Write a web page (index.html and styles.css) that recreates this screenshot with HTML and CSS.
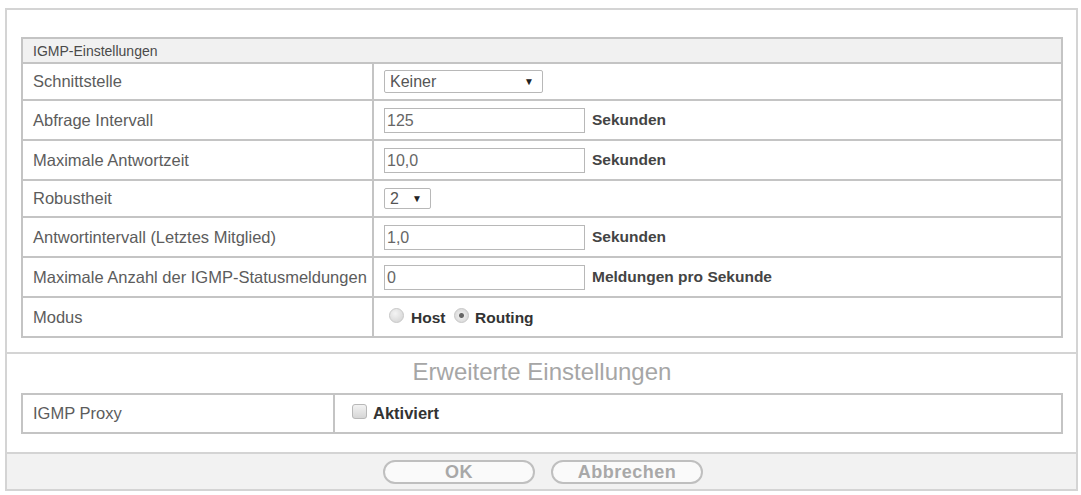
FILE: index.html
```html
<!DOCTYPE html>
<html lang="de">
<head>
  <meta charset="UTF-8" />
  <title>IGMP</title>
  <link rel="stylesheet" href="styles.css">
</head>
<body>

<div class="frame">
  <div class="section">
    <table class="grid">
      <tr class="head"><td colspan="2">IGMP-Einstellungen</td></tr>
      <tr class="short">
        <td class="label">Schnittstelle</td>
        <td class="value"><span class="select wide">Keiner<span class="arrow">&#9660;</span></span></td>
      </tr>
      <tr>
        <td class="label">Abfrage Intervall</td>
        <td class="value"><span class="input">125</span><b class="unit">Sekunden</b></td>
      </tr>
      <tr>
        <td class="label">Maximale Antwortzeit</td>
        <td class="value"><span class="input">10,0</span><b class="unit">Sekunden</b></td>
      </tr>
      <tr class="short">
        <td class="label">Robustheit</td>
        <td class="value"><span class="select small">2<span class="arrow">&#9660;</span></span></td>
      </tr>
      <tr>
        <td class="label">Antwortintervall (Letztes Mitglied)</td>
        <td class="value"><span class="input">1,0</span><b class="unit">Sekunden</b></td>
      </tr>
      <tr>
        <td class="label">Maximale Anzahl der IGMP-Statusmeldungen</td>
        <td class="value"><span class="input">0</span><b class="unit">Meldungen pro Sekunde</b></td>
      </tr>
      <tr>
        <td class="label">Modus</td>
        <td class="value">
          <span class="radio"></span><b class="opt">Host</b>
          <span class="radio on"></span><b class="opt">Routing</b>
        </td>
      </tr>
    </table>
  </div>

  <div class="section extra">
    <div class="title">Erweiterte Einstellungen</div>
    <table class="grid proxy">
      <tr>
        <td class="label">IGMP Proxy</td>
        <td class="value"><span class="check"></span><b class="opt">Aktiviert</b></td>
      </tr>
    </table>
  </div>

  <div class="footer">
    <button class="pill">OK</button>
    <button class="pill">Abbrechen</button>
  </div>
</div>

</body>
</html>
```

FILE: styles.css
```css
* {
  box-sizing: border-box;
  font-family: 'Liberation Sans', Arial, sans-serif;
}

body {
  margin: 0;
  padding: 8px 3px 0 5px;
  background-color: #fff;
}

.frame {
  width: 1073px;
  border: 2px solid #d4d4d4;
  background-color: #fff;
}

.section {
  padding: 27px 13px 14px 14px;
  border-bottom: 2px solid #d4d4d4;
}

.grid {
  width: 100%;
  border-collapse: collapse;
  border: 2px solid #c4c4c4;
}

.grid td {
  border: 2px solid #c4c4c4;
  height: 40px;
  font-size: 16.5px;
  color: #5c5c5c;
  vertical-align: middle;
}

.grid tr.short td {
  height: 37px;
}

.grid tr.head td {
  height: 25px;
  font-size: 14px;
  padding-left: 10px;
  color: #4a4a4a;
  background-color: #f1f1f1;
}

.grid td.label {
  width: 351px;
  padding-left: 10px;
}

.grid td.value {
  padding-left: 10px;
}

.input {
  display: inline-block;
  width: 201px;
  height: 25px;
  line-height: 23px;
  padding-left: 2px;
  border: 1px solid #b8b8b8;
  font-size: 16px;
  color: #666;
  vertical-align: middle;
}

.unit {
  display: inline-block;
  margin-left: 7px;
  font-size: 15.5px;
  color: #444;
  vertical-align: middle;
}

.select {
  display: inline-flex;
  justify-content: space-between;
  align-items: center;
  height: 23px;
  padding: 0 8px 0 5px;
  border: 1px solid #b8b8b8;
  border-radius: 2px;
  font-size: 16px;
  color: #555;
}

.select.wide {
  width: 159px;
}

.select.small {
  width: 47px;
  height: 21px;
}

.arrow {
  font-size: 10px;
  color: #222;
}

.radio {
  display: inline-block;
  width: 15px;
  height: 15px;
  margin: 0 7px 0 5px;
  border-radius: 50%;
  border: 1px solid #c8c8c8;
  background: radial-gradient(circle at 40% 35%, #f4f4f4, #d0d0d0);
  vertical-align: 0;
}

.radio.on {
  margin-left: 4px;
  margin-right: 6px;
  background: radial-gradient(circle, #666 0 2px, #eaeaea 3px, #d0d0d0);
}

.opt {
  color: #333;
  font-size: 15.5px;
}

.check {
  display: inline-block;
  width: 15px;
  height: 15px;
  margin: 0 6px 0 7px;
  border: 1px solid #b8b8b8;
  border-radius: 3px;
  background: linear-gradient(#f2f2f2, #d6d6d6);
  vertical-align: 0;
}

.proxy .opt {
  font-size: 16.5px;
}

.extra {
  padding-top: 4px;
  padding-bottom: 18px;
}

.title {
  text-align: center;
  font-size: 24px;
  color: #a6a6a6;
  margin-bottom: 7px;
}

.proxy td {
  height: 39px;
}

.proxy td.label {
  width: 312px;
  vertical-align: top;
  padding-top: 9px;
}

.footer {
  display: flex;
  justify-content: center;
  gap: 16px;
  padding: 6px 0 5px 3px;
  background-color: #f2f2f2;
}

.pill {
  width: 152px;
  height: 24px;
  padding: 0;
  border: 2px solid #bfbfbf;
  border-radius: 12px;
  background-color: #fafafa;
  color: #a8a8a8;
  font-size: 18px;
  line-height: 18px;
  font-weight: bold;
  letter-spacing: 0.5px;
}
```
